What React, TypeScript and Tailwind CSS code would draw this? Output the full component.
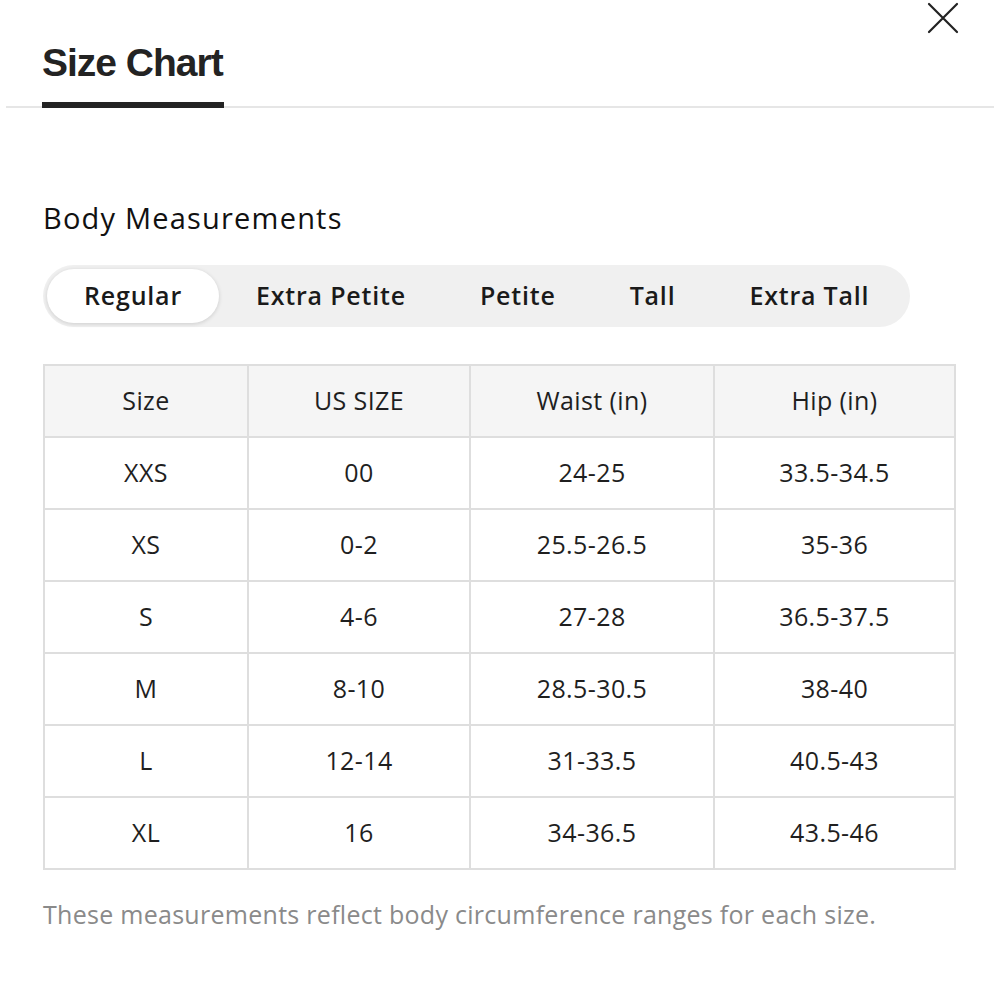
import { useState } from "react";

const tabs = ["Regular", "Extra Petite", "Petite", "Tall", "Extra Tall"];

const rows = [
  ["XXS", "00", "24-25", "33.5-34.5"],
  ["XS", "0-2", "25.5-26.5", "35-36"],
  ["S", "4-6", "27-28", "36.5-37.5"],
  ["M", "8-10", "28.5-30.5", "38-40"],
  ["L", "12-14", "31-33.5", "40.5-43"],
  ["XL", "16", "34-36.5", "43.5-46"],
];

const cols = ["w-[204px]", "w-[222px]", "w-[244px]", "w-[241px]"];

export default function App() {
  const [active, setActive] = useState(0);
  return (
    <div className="w-[1000px] h-[1000px] bg-white text-[#1f1f1f] font-['Open_Sans',sans-serif] overflow-hidden">
      <header className="relative px-[6px]">
        <button type="button" aria-label="Close" className="absolute right-[41px] top-[2px] h-[32px] w-[32px] inline-flex items-center justify-center">
          <svg width="32" height="32" viewBox="0 0 32 32" fill="none" stroke="#222" strokeWidth="2.2" strokeLinecap="round">
            <path d="M2 2 L30 30 M30 2 L2 30" />
          </svg>
        </button>
        <div className="pt-[41px] border-b-2 border-[#e6e6e6] pl-[36px]">
          <div className="inline-block">
            <h1 className="font-['Liberation_Sans',sans-serif] font-bold text-[39px] leading-[44px] tracking-[-1px] text-[#232323]">Size Chart</h1>
            <div className="mt-[17px] h-[6px] w-[182px] bg-[#232323] -mb-[2px]" />
          </div>
        </div>
      </header>

      <main className="px-[43px]">
        <h2 className="mt-[93px] text-[29px] leading-[34px] font-normal tracking-[1.2px] text-[#111]">Body Measurements</h2>

        <div className="mt-[30px] inline-flex items-center p-[4px] rounded-full bg-[#f0f0f0]">
          {tabs.map((t, i) => (
            <button
              key={t}
              type="button"
              onClick={() => setActive(i)}
              className={
                i === active
                  ? "h-[54px] px-[37px] rounded-full bg-white shadow-[0_1px_4px_rgba(0,0,0,0.15)] text-[25px] font-semibold tracking-[0.8px] text-[#1a1a1a]"
                  : "h-[54px] px-[37px] rounded-full text-[25px] font-semibold tracking-[0.8px] text-[#1a1a1a]"
              }
            >
              {t}
            </button>
          ))}
        </div>

        <table className="mt-[37px] border-collapse text-[25px] tracking-[0.4px] text-[#1f1f1f]">
          <thead>
            <tr className="bg-[#f5f5f5]">
              {["Size", "US SIZE", "Waist (in)", "Hip (in)"].map((h, i) => (
                <th key={h} className={`${cols[i]} h-[72px] border-2 border-[#dedede] font-normal text-center`}>{h}</th>
              ))}
            </tr>
          </thead>
          <tbody>
            {rows.map((r) => (
              <tr key={r[0]}>
                {r.map((c, i) => (
                  <td key={i} className={`${cols[i]} h-[72px] border-2 border-[#dedede] text-center`}>{c}</td>
                ))}
              </tr>
            ))}
          </tbody>
        </table>

        <p className="mt-[29px] text-[25px] leading-[30px] tracking-[0.28px] text-[#8a8a8a]">
          These measurements reflect body circumference ranges for each size.
        </p>
      </main>
    </div>
  );
}
